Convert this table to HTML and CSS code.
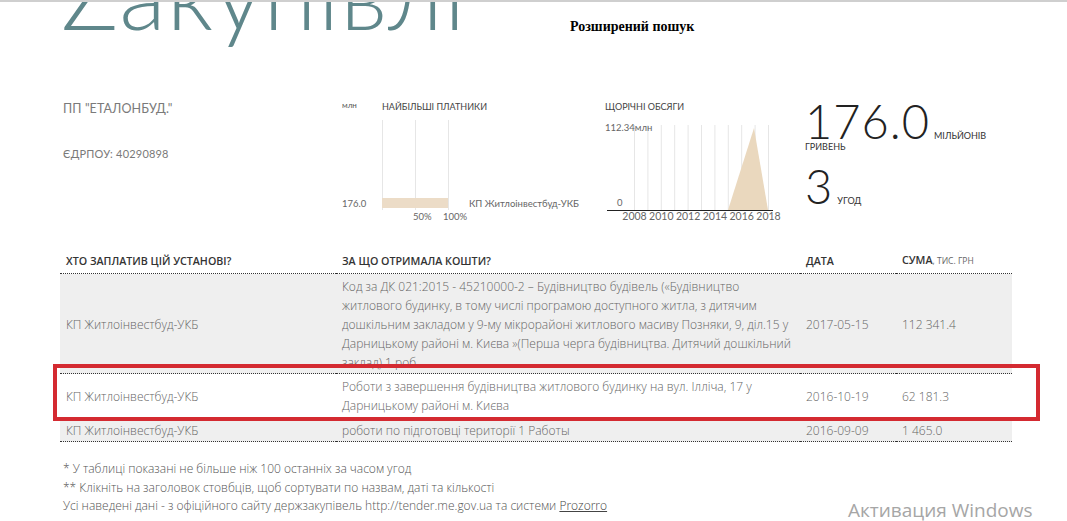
FILE: index.html
```html
<!DOCTYPE html>
<html lang="uk">
<head>
<meta charset="utf-8">
<title>Закупівлі</title>
<link rel="stylesheet" href="styles.css">
</head>
<body>
<div class="page">
  <header class="masthead">
    <h1 class="logo">Zакупівлі</h1>
    <a class="search-link" href="#">Розширений пошук</a>
  </header>

  <section class="summary">
    <div class="company">
      <div class="company-name">ПП "ЕТАЛОНБУД."</div>
      <div class="company-code">ЄДРПОУ: 40290898</div>
    </div>

    <div class="chart chart-payers">
      <svg width="250" height="125" viewBox="0 0 250 125">
        <text class="axis-small" x="0" y="10">млн</text>
        <text class="chart-title" x="40" y="12">НАЙБІЛЬШІ ПЛАТНИКИ</text>
        <line class="grid" x1="40.5" y1="22" x2="40.5" y2="112"/>
        <line class="grid" x1="73.5" y1="22" x2="73.5" y2="112"/>
        <line class="grid" x1="106.5" y1="22" x2="106.5" y2="112"/>
        <rect class="bar" x="40" y="100" width="66" height="10"/>
        <text class="label" x="0" y="109">176.0</text>
        <text class="label" x="127" y="109">КП Житлоінвестбуд-УКБ</text>
        <text class="label" x="71" y="122">50%</text>
        <text class="label" x="101" y="122">100%</text>
      </svg>
    </div>

    <div class="chart chart-years">
      <svg width="185" height="125" viewBox="0 0 185 125">
        <text class="chart-title" x="0" y="12">ЩОРІЧНІ ОБСЯГИ</text>
        <g class="grid">
          <line x1="29.5" y1="27" x2="29.5" y2="112"/>
          <line x1="42.9" y1="27" x2="42.9" y2="112"/>
          <line x1="56.3" y1="27" x2="56.3" y2="112"/>
          <line x1="69.7" y1="27" x2="69.7" y2="112"/>
          <line x1="83.1" y1="27" x2="83.1" y2="112"/>
          <line x1="96.5" y1="27" x2="96.5" y2="112"/>
          <line x1="109.9" y1="27" x2="109.9" y2="112"/>
          <line x1="123.3" y1="27" x2="123.3" y2="112"/>
          <line x1="136.7" y1="27" x2="136.7" y2="112"/>
          <line x1="150.1" y1="27" x2="150.1" y2="112"/>
          <line x1="163.5" y1="27" x2="163.5" y2="112"/>
        </g>
        <polygon class="area" points="123,112 149,30 163,112"/>
        <line class="axis" x1="2" y1="112.5" x2="168" y2="112.5"/>
        <text class="label" x="0" y="33">112.34млн</text>
        <text class="label" x="12" y="108">0</text>
        <text class="label year" x="29.5" y="122">2008</text>
        <text class="label year" x="56.3" y="122">2010</text>
        <text class="label year" x="83.1" y="122">2012</text>
        <text class="label year" x="109.9" y="122">2014</text>
        <text class="label year" x="136.7" y="122">2016</text>
        <text class="label year" x="163.5" y="122">2018</text>
      </svg>
    </div>

    <div class="stats">
      <div class="stat-line stat-total"><span class="stat-num">176.0</span><span class="stat-unit">мільйонів</span></div>
      <div class="stat-sub">гривень</div>
      <div class="stat-line stat-count"><span class="stat-num">3</span><span class="stat-unit">угод</span></div>
    </div>
  </section>

  <div class="table-wrap">
    <table class="deals">
      <colgroup>
        <col class="c-payer"><col class="c-subject"><col class="c-date"><col class="c-sum">
      </colgroup>
      <thead>
        <tr>
          <th>Хто заплатив цій установі?</th>
          <th>За що отримала кошти?</th>
          <th>Дата</th>
          <th>Сума<span class="th-unit">, тис. грн</span></th>
        </tr>
      </thead>
      <tbody>
        <tr>
          <td>КП Житлоінвестбуд-УКБ</td>
          <td>Код за ДК 021:2015 - 45210000-2 – Будівництво будівель («Будівництво житлового будинку, в тому числі програмою доступного житла, з дитячим дошкільним закладом у 9-му мікрорайоні житлового масиву Позняки, 9, діл.15 у Дарницькому районі м. Києва »(Перша черга будівництва. Дитячий дошкільний заклад) 1 роб</td>
          <td>2017-05-15</td>
          <td>112 341.4</td>
        </tr>
        <tr class="row-mid">
          <td>КП Житлоінвестбуд-УКБ</td>
          <td>Роботи з завершення будівництва житлового будинку на вул. Ілліча, 17 у Дарницькому районі м. Києва</td>
          <td>2016-10-19</td>
          <td>62 181.3</td>
        </tr>
        <tr class="row-last">
          <td>КП Житлоінвестбуд-УКБ</td>
          <td>роботи по підготовці території 1 Работы</td>
          <td>2016-09-09</td>
          <td>1 465.0</td>
        </tr>
      </tbody>
    </table>
    <div class="highlight"></div>
  </div>

  <footer class="notes">
    <p>* У таблиці показані не більше ніж 100 останніх за часом угод</p>
    <p>** Клікніть на заголовок стовбців, щоб сортувати по назвам, даті та кількості</p>
    <p>Усі наведені дані - з офіційного сайту держзакупівель http://tender.me.gov.ua та системи <a href="#">Prozorro</a></p>
  </footer>

  <div class="watermark">Активация Windows</div>
</div>
</body>
</html>
```

FILE: styles.css
```css
html, body {
  margin: 0;
  padding: 0;
  background: #fff;
}

.page {
  position: relative;
  width: 1067px;
  height: 521px;
  overflow: hidden;
  border-top: 2px solid #cfcfcf;
  box-sizing: border-box;
  font-family: "Open Sans", "Noto Sans", sans-serif;
  color: #666;
}

/* ---------- masthead ---------- */
.masthead {
  display: flex;
  align-items: flex-start;
  height: 100px;
  margin-top: -42px;
  padding-left: 61px;
}

.logo {
  margin: -15px 0 0;
  font-family: "Lato", "Noto Sans", sans-serif;
  font-weight: 300;
  font-size: 96px;
  line-height: 1;
  letter-spacing: 1px;
  color: #5f878b;
  width: 509px;
}

.search-link {
  margin-top: 59px;
  font-family: "Liberation Serif", "Times New Roman", serif;
  font-weight: bold;
  font-size: 14px;
  line-height: 16px;
  color: #000;
  text-decoration: none;
}

/* ---------- summary ---------- */
.summary {
  display: grid;
  grid-template-columns: 279px 263px 200px auto;
  margin-top: 38px;
  padding-left: 63px;
  height: 125px;
}

.company {
  font-family: "Lato", "Noto Sans", sans-serif;
  font-weight: 400;
  color: #7a7a7a;
}

.company-name {
  font-size: 12.5px;
  margin-top: 3px;
  letter-spacing: 0.1px;
}

.company-code {
  font-size: 11px;
  margin-top: 31px;
  letter-spacing: 0.2px;
}

.chart svg {
  display: block;
  font-family: "Lato", "Noto Sans", sans-serif;
}

.chart-title {
  font-size: 9px;
  fill: #444;
}

.axis-small {
  font-size: 8px;
  fill: #555;
}

.label {
  font-size: 9.5px;
  fill: #666;
}

.year {
  text-anchor: middle;
  font-size: 10.5px;
}

.grid, .grid line {
  stroke: #e6e6e6;
  stroke-width: 1;
}

.bar {
  fill: #ecdcc7;
}

.area {
  fill: #ead8be;
}

.axis {
  stroke: #222;
  stroke-width: 1;
}

.stats {
  font-family: "Lato", "Noto Sans", sans-serif;
  color: #222;
}

.stat-line {
  display: flex;
  align-items: baseline;
  gap: 4px;
}

.stat-total {
  margin-top: 3px;
}

.stat-num {
  font-weight: 300;
  font-size: 47px;
  line-height: 40px;
  letter-spacing: 1px;
}

.stat-unit {
  font-size: 9px;
  font-weight: 400;
  text-transform: uppercase;
  color: #333;
}

.stat-sub {
  font-size: 9px;
  text-transform: uppercase;
  color: #333;
  margin-top: 0;
}

.stat-count {
  margin-top: 14px;
}

/* ---------- table ---------- */
.table-wrap {
  position: relative;
  margin-top: 27px;
  padding-left: 60px;
}

.deals {
  width: 952px;
  border-collapse: collapse;
  table-layout: fixed;
  font-size: 12px;
}

.c-payer { width: 276px; }
.c-subject { width: 464px; }
.c-date { width: 96px; }
.c-sum { width: 116px; }

.deals th {
  text-align: left;
  font-weight: 600;
  font-size: 10.7px;
  text-transform: uppercase;
  color: #333;
  padding: 2px 6px 4px;
  line-height: 16px;
  border-bottom: 1px dotted #333;
}

.th-unit {
  font-weight: 400;
  font-size: 8.5px;
  color: #666;
}

.deals td {
  padding: 3px 6px 1px;
  line-height: 19px;
  font-weight: 300;
  color: #666;
  vertical-align: middle;
  border-bottom: 1px dotted #333;
}

.deals tbody tr:nth-child(odd) {
  background: #efefef;
}

.row-mid td {
  padding-top: 3px;
  padding-bottom: 4px;
}

.row-last td {
  padding-top: 1px;
  padding-bottom: 1px;
}

.highlight {
  position: absolute;
  left: 53px;
  top: 114px;
  width: 987px;
  height: 57px;
  box-sizing: border-box;
  border: 4px solid #d42a31;
  pointer-events: none;
}

/* ---------- notes ---------- */
.notes {
  margin-top: 18px;
  padding-left: 63px;
  font-size: 12px;
  font-weight: 300;
  line-height: 18.5px;
  color: #555;
}

.notes p {
  margin: 0;
}

.notes a {
  color: #444;
  text-decoration: underline;
}

.watermark {
  position: absolute;
  left: 848px;
  top: 495px;
  font-family: "Open Sans", "Noto Sans", sans-serif;
  font-size: 19px;
  color: #a6a6a6;
}
```
